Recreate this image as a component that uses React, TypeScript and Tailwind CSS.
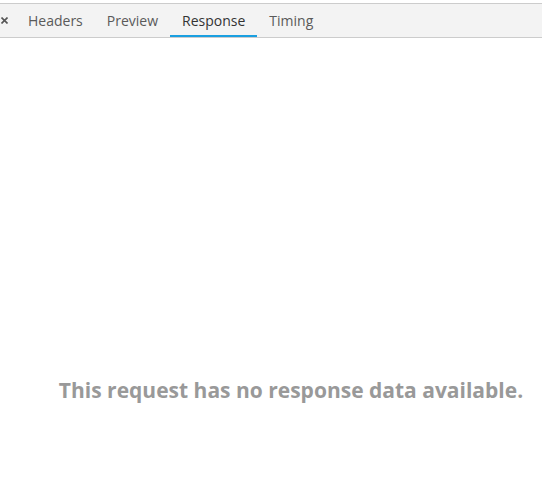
export default function App() {
  const tabs = ["Headers", "Preview", "Response", "Timing"];
  return (
    <div className="w-[542px] h-[477px] bg-white flex flex-col" style={{ fontFamily: '"Open Sans", sans-serif' }}>
      <div className="mt-[3px] h-[35px] bg-[#f3f3f3] border-t border-b border-[#cccccc] flex items-stretch">
        <div className="w-[16px] flex items-center justify-start pl-[1px]">
          <svg width="7" height="7" viewBox="0 0 7 7" className="mt-[-1px]">
            <path d="M0.5 0.5 L6.5 6.5 M6.5 0.5 L0.5 6.5" stroke="#555" strokeWidth="1.6" />
          </svg>
        </div>
        {tabs.map((t) => (
          <div
            key={t}
            className={
              "px-3 flex items-center text-[14px] relative " +
              (t === "Response" ? "text-[#333]" : "text-[#5a5a5a]")
            }
          >
            {t}
            {t === "Response" && <div className="absolute left-0 right-0 bottom-0 h-[2px] bg-[#1a9fe0]" />}
          </div>
        ))}
      </div>
      <div className="flex justify-center pl-[40px] pt-[338px]">
        <div className="text-[21px] font-bold text-[#999] leading-[28px]">This request has no response data available.</div>
      </div>
    </div>
  );
}
